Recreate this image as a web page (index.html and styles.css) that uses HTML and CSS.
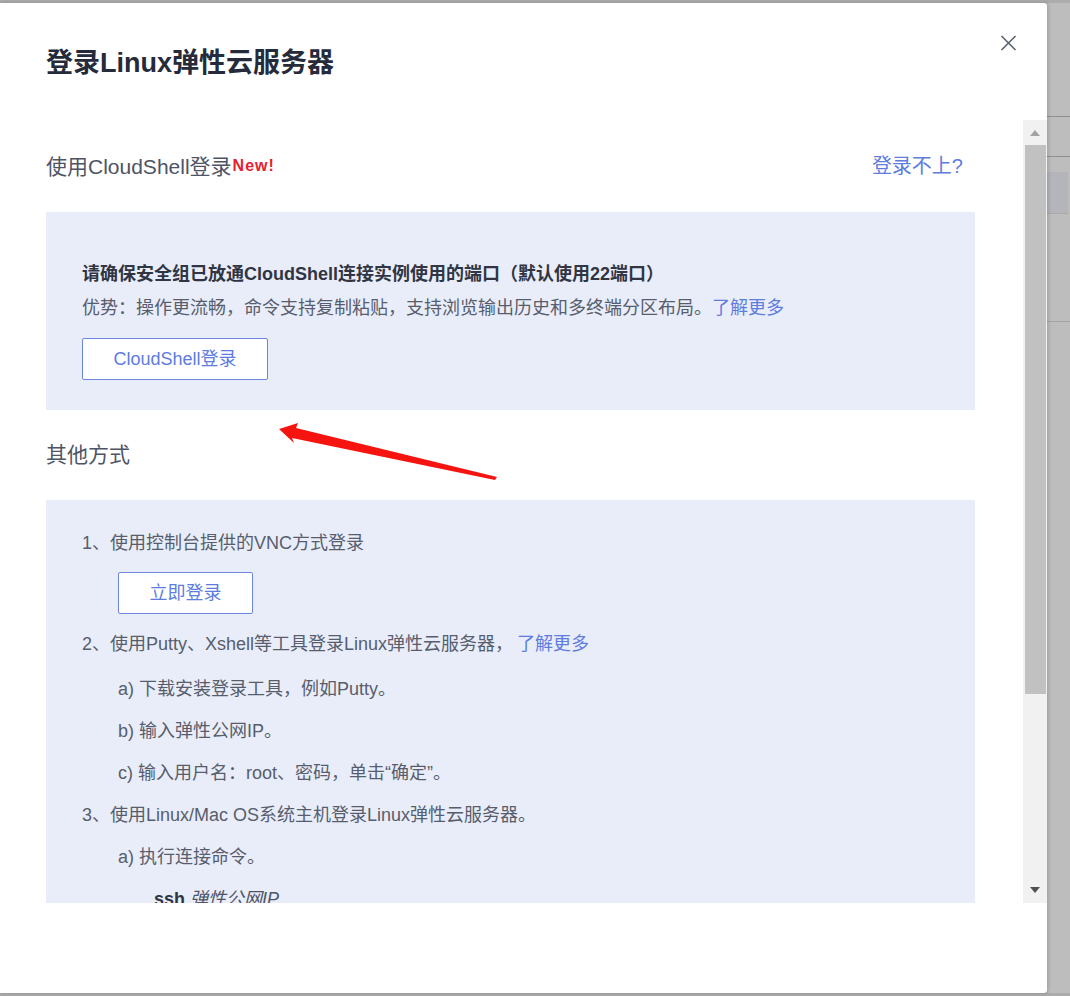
FILE: index.html
```html
<!DOCTYPE html>
<html lang="zh-CN">
<head>
<meta charset="utf-8">
<title>登录Linux弹性云服务器</title>
<link rel="stylesheet" href="styles.css">
</head>
<body>
<div class="stage">
  <div class="dialog">
    <div class="dlg-header">
      <h1 class="dlg-title">登录Linux弹性云服务器</h1>
      <svg class="close" viewBox="0 0 17 16" width="17" height="16"><path d="M1.5 1L15.5 15M15.5 1L1.5 15" stroke="#5b6070" stroke-width="1.6" fill="none"/></svg>
    </div>
    <div class="dlg-body">
      <div class="scroll-content">
        <div class="section-head">
          <div class="sec-title">使用CloudShell登录<span class="new">New!</span></div>
          <a class="link link-big">登录不上?</a>
        </div>
        <div class="panel panel-cs">
          <p class="strong">请确保安全组已放通CloudShell连接实例使用的端口（默认使用22端口）</p>
          <p class="line adv">优势：操作更流畅，命令支持复制粘贴，支持浏览输出历史和多终端分区布局。<a class="link">了解更多</a></p>
          <button class="btn btn-cs">CloudShell登录</button>
        </div>
        <div class="sec-title other">其他方式</div>
        <div class="panel panel-other">
          <p class="line first">1、使用控制台提供的VNC方式登录</p>
          <button class="btn btn-now">立即登录</button>
          <p class="line">2、使用Putty、Xshell等工具登录Linux弹性云服务器，<a class="link gap">了解更多</a></p>
          <p class="line sub s-first">a) 下载安装登录工具，例如Putty。</p>
          <p class="line sub">b) 输入弹性公网IP。</p>
          <p class="line sub">c) 输入用户名：root、密码，单击“确定”。</p>
          <p class="line">3、使用Linux/Mac OS系统主机登录Linux弹性云服务器。</p>
          <p class="line sub">a) 执行连接命令。</p>
          <p class="line cmd"><b>ssh</b> <i>弹性公网IP</i></p>
        </div>
      </div>
      <div class="scrollbar">
        <div class="sb-btn"><span class="tri-up"></span></div>
        <div class="sb-thumb"></div>
        <div class="sb-space"></div>
        <div class="sb-btn"><span class="tri-down"></span></div>
      </div>
    </div>
  </div>
  <div class="backdrop">
    <div class="bd-row r1"></div>
    <div class="bd-row r2"></div>
    <div class="bd-row r3"></div>
    <div class="bd-row r4"></div>
    <div class="bd-row r5"></div>
  </div>
</div>
<svg class="arrow" width="1070" height="996" viewBox="0 0 1070 996">
  <polygon points="279,429 298,423 296,428 497,477 495,480 292,438 294,443" fill="#f5140f"/>
</svg>
</body>
</html>
```
FILE: styles.css
```css
* { box-sizing: border-box; margin: 0; padding: 0; }
html, body { width: 1070px; height: 996px; overflow: hidden; }
body {
  background: #acacac;
  font-family: "Liberation Sans", "Noto Sans CJK SC", sans-serif;
  color: #575d6c;
  position: relative;
}
.stage { display: flex; margin-top: 3px; height: 990px; }
.dialog {
  width: 1047px; height: 990px; flex: none;
  background: #fff;
  border-radius: 0 3px 3px 0;
  box-shadow: 1px 0 4px rgba(0,0,0,.18);
  display: flex; flex-direction: column;
  position: relative; z-index: 1;
}
.dlg-header {
  height: 117px; flex: none;
  display: flex; justify-content: space-between; align-items: flex-start;
  padding: 32px 30px 0 46px;
}
.dlg-title { font-size: 27px; line-height: 36px; font-weight: 700; color: #252b3a; margin-top: 10px; }
.close { display: block; }
.dlg-body { display: flex; height: 783px; flex: none; }
.scroll-content { flex: 1; overflow: hidden; padding: 31px 48px 0 46px; }
.section-head { display: flex; justify-content: space-between; align-items: center; height: 30px; padding-right: 12px; }
.sec-title { font-size: 21px; line-height: 30px; color: #4e5466; }
.new { font-size: 16px; font-weight: 700; color: #e8202f; vertical-align: 3px; margin-left: 1px; letter-spacing: 1px; }
.link { color: #5e7ce0; text-decoration: none; }
.link-big { font-size: 20px; line-height: 30px; }
.panel { background: #e9edfa; }
.panel-cs { margin-top: 31px; height: 198px; padding: 50px 36px 0; }
.strong { font-weight: 700; color: #303543; font-size: 18px; line-height: 24px; }
.line { font-size: 18px; line-height: 24px; margin-top: 18px; }
.adv { margin-top: 10px; }
.btn {
  display: block; height: 42px;
  border: 1px solid #6b85e0; border-radius: 2px;
  background: #fff; color: #5e7ce0;
  font-family: inherit; font-size: 18px; line-height: 40px;
}
.btn-cs { width: 186px; margin-top: 18px; }
.other { margin-top: 30px; }
.panel-other { margin-top: 30px; padding: 31px 36px 60px; }
.line.first { margin-top: 0; }
.btn-now { width: 135px; margin: 17px 0 0 36px; }
.gap { margin-left: 4px; }
.sub { padding-left: 36px; }
.s-first { margin-top: 21px; }
.cmd { padding-left: 72px; color: #4e5466; }
.cmd b { font-weight: 700; color: #303543; }
.scrollbar { width: 24px; flex: none; background: #f1f1f1; display: flex; flex-direction: column; align-items: center; }
.sb-btn { height: 25px; width: 100%; flex: none; display: flex; align-items: center; justify-content: center; }
.tri-up { width: 0; height: 0; border-left: 5.5px solid transparent; border-right: 5.5px solid transparent; border-bottom: 6px solid #a3a3a3; margin-top: 1px; }
.tri-down { width: 0; height: 0; border-left: 5.5px solid transparent; border-right: 5.5px solid transparent; border-top: 6px solid #505050; margin-bottom: 2px; }
.sb-thumb { width: 21px; height: 549px; background: #c1c1c1; margin-left: 1px; flex: none; }
.sb-space { flex: 1; }
.backdrop { flex: 1; background: #bdbdbd; display: flex; flex-direction: column; }
.bd-row { flex: none; }
.r1 { height: 114px; border-bottom: 1px solid #8f8f8f; }
.r2 { height: 40px; border-bottom: 1px solid #8f8f8f; }
.r3 { height: 15px; }
.r4 { height: 42px; background: #b3b5ba; border-bottom: 1px solid #a9a9a9; margin-right: 2px; }
.r5 { height: 108px; border-bottom: 1px solid #a6a6a6; }
.arrow { position: absolute; left: 0; top: 0; pointer-events: none; z-index: 2; }
```
